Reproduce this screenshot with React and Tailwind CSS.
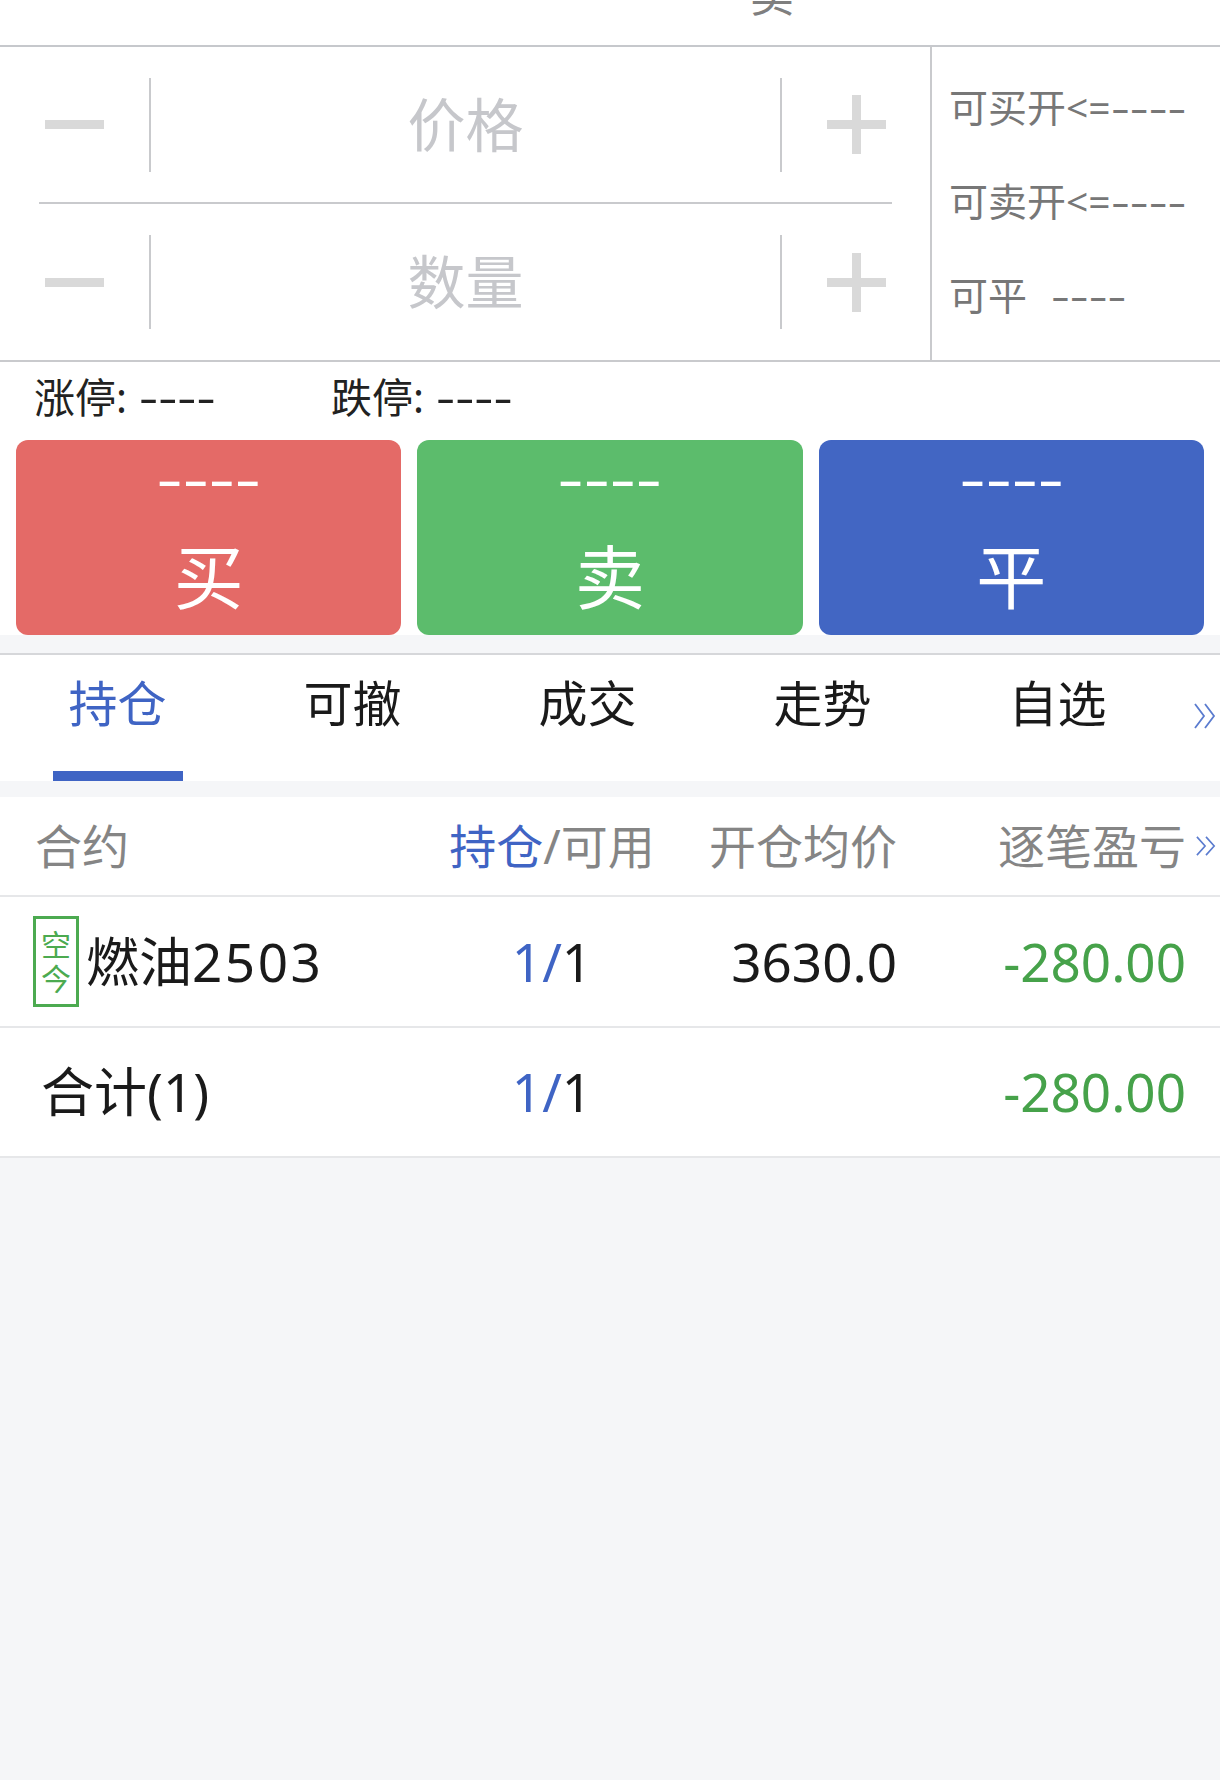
import React from 'react';

function Chevrons() {
  return (
    <svg width="24" height="26" viewBox="0 0 24 26" fill="none">
      <polyline points="2,1 11,13 2,25" stroke="#5b7ccf" strokeWidth="1.8" />
      <polyline points="12,1 21,13 12,25" stroke="#5b7ccf" strokeWidth="1.8" />
    </svg>
  );
}

function Plus() {
  return (
    <svg width="59" height="59" viewBox="0 0 59 59">
      <rect x="0" y="25" width="59" height="9" fill="#d9d9d9" />
      <rect x="25" y="0" width="9" height="59" fill="#d9d9d9" />
    </svg>
  );
}

function StepRow({ label, height }) {
  return (
    <div className={`flex items-center ${height}`}>
      <div className="flex w-[149px] justify-center">
        <div className="h-[9px] w-[59px] bg-[#d9d9d9]" />
      </div>
      <div className="h-[94px] w-[2px] bg-[#c9cacd]" />
      <div className="flex-1 text-center text-[58px] leading-none text-[#c6c7cb]">{label}</div>
      <div className="h-[94px] w-[2px] bg-[#c9cacd]" />
      <div className="flex w-[148px] justify-center">
        <Plus />
      </div>
    </div>
  );
}

function TradeButton({ label, color }) {
  return (
    <div className={`flex flex-1 flex-col items-center rounded-[12px] text-white ${color}`}>
      <div className="mt-[18px] h-[40px] text-[54px] leading-[40px]">
        <span className="inline-block scale-x-[1.5]">----</span>
      </div>
      <div className="mt-[39px] text-[70px] leading-[80px]">{label}</div>
    </div>
  );
}

const tabs = ['持仓', '可撤', '成交', '走势', '自选'];

export default function App() {
  return (
    <div className="min-h-[1780px] w-[1220px] overflow-hidden bg-[#f5f6f8] font-['Noto_Sans','Noto_Sans_CJK_SC',sans-serif]">
      {/* top bar, title scrolled out of view */}
      <div className="h-[47px] overflow-hidden border-b-2 border-[#c6c8cc] bg-white">
        <div className="-mt-[27px] pl-[750px] text-[44px] leading-none text-[#7f7f7f]">卖</div>
      </div>

      {/* price / quantity inputs */}
      <div className="flex h-[315px] border-b-2 border-[#c9cacd] bg-white">
        <div className="flex w-[930px] flex-col">
          <StepRow label="价格" height="h-[155px]" />
          <div className="ml-[39px] h-[2px] w-[853px] bg-[#c9cacd]" />
          <StepRow label="数量" height="h-[156px]" />
        </div>
        <div className="w-[2px] bg-[#c9cacd]" />
        <div className="flex flex-1 flex-col pl-[17px] pt-[7px] text-[39px] text-[#777777]">
          <div className="flex h-[94px] items-baseline pt-[24px]">
            <span>可买开&lt;=</span>
            <span className="inline-block origin-left scale-x-[1.5]">----</span>
          </div>
          <div className="flex h-[94px] items-baseline pt-[24px]">
            <span>可卖开&lt;=</span>
            <span className="inline-block origin-left scale-x-[1.5]">----</span>
          </div>
          <div className="flex h-[94px] items-baseline pt-[24px]">
            <span>可平</span>
            <span className="ml-[24px] inline-block origin-left scale-x-[1.5]">----</span>
          </div>
        </div>
      </div>

      {/* limit prices */}
      <div className="flex h-[78px] items-center bg-white pb-[6px] pl-[34px] text-[41px] text-[#222222]">
        <div className="flex w-[297px] items-baseline">
          <span>涨停: </span>
          <span className="ml-[12px] inline-block origin-left scale-x-[1.45]">----</span>
        </div>
        <div className="flex items-baseline">
          <span>跌停: </span>
          <span className="ml-[12px] inline-block origin-left scale-x-[1.45]">----</span>
        </div>
      </div>

      {/* order buttons */}
      <div className="flex h-[195px] gap-[16px] bg-white px-[16px]">
        <TradeButton label="买" color="bg-[#e46a67]" />
        <TradeButton label="卖" color="bg-[#5cbc6c]" />
        <TradeButton label="平" color="bg-[#4266c3]" />
      </div>

      <div className="h-[20px] border-b-2 border-[#d6d7da] bg-[#f5f6f8]" />

      {/* tabs */}
      <div className="flex h-[126px] bg-white">
        {tabs.map((t, i) => (
          <div key={t} className="flex w-[235px] flex-col items-center justify-between">
            <div
              className={`mt-[20px] text-[49px] leading-[56px] ${i === 0 ? 'text-[#3f64c4]' : 'text-[#1a1a1a]'}`}
            >
              {t}
            </div>
            {i === 0 ? <div className="h-[10px] w-[130px] bg-[#3f64c4]" /> : <div className="h-[10px]" />}
          </div>
        ))}
        <div className="pl-[18px] pt-[48px]">
          <Chevrons />
        </div>
      </div>

      <div className="h-[16px]" />

      {/* positions table */}
      <div className="bg-white">
        <div className="grid h-[100px] grid-cols-[446px_212px_239px_289px_34px] items-center border-b-2 border-[#e6e7e9] text-[47px] text-[#858585]">
          <div className="pl-[35px]">合约</div>
          <div className="text-center">
            <span className="text-[#3f64c4]">持仓</span>/可用
          </div>
          <div className="text-right">开仓均价</div>
          <div className="text-right">逐笔盈亏</div>
          <div className="pl-[9px]">
            <svg width="22" height="20" viewBox="0 0 24 22" fill="none">
              <polyline points="2,1 11,11 2,21" stroke="#5b7ccf" strokeWidth="1.8" />
              <polyline points="12,1 21,11 12,21" stroke="#5b7ccf" strokeWidth="1.8" />
            </svg>
          </div>
        </div>

        <div className="grid h-[131px] grid-cols-[446px_212px_239px_289px_34px] items-center border-b-2 border-[#e6e7e9] text-[53px] text-[#1a1a1a]">
          <div className="flex items-center pl-[33px]">
            <div className="flex h-[91px] w-[46px] flex-col items-center justify-center border-[3px] border-[#4caa50] text-[30px] leading-[34px] text-[#4caa50]">
              <span>空</span>
              <span>今</span>
            </div>
            <span className="ml-[7px]">
              燃油<span className="tracking-[2.5px]">2503</span>
            </span>
          </div>
          <div className="text-center">
            <span className="text-[#3f64c4]">1/</span>1
          </div>
          <div className="text-right">3630.0</div>
          <div className="text-right text-[#46a24a]">-280.00</div>
          <div />
        </div>

        <div className="grid h-[130px] grid-cols-[446px_212px_239px_289px_34px] items-center border-b-2 border-[#e6e7e9] text-[53px] text-[#1a1a1a]">
          <div className="pl-[41px]">合计(1)</div>
          <div className="text-center">
            <span className="text-[#3f64c4]">1/</span>1
          </div>
          <div />
          <div className="text-right text-[#46a24a]">-280.00</div>
          <div />
        </div>
      </div>
    </div>
  );
}
